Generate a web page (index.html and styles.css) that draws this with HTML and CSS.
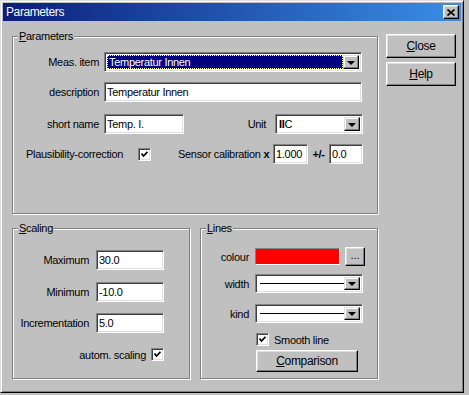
FILE: index.html
```html
<!DOCTYPE html>
<html lang="en">
<head>
  <meta charset="UTF-8" />
  <title>Parameters</title>
  <link rel="stylesheet" href="styles.css">
</head>
<body>
  <div class="window">
    <div class="titlebar">
      <span class="title">Parameters</span>
      <span class="title-btn">
        <svg width="8" height="7" viewBox="0 0 8 7"><path d="M0.5 0.5 L7.5 6.5 M7.5 0.5 L0.5 6.5" stroke="#000" stroke-width="1.6" fill="none"/></svg>
      </span>
    </div>

    <div class="content">
      <div class="main">
        <!-- Parameters group -->
        <fieldset class="group group-params">
          <legend><u>P</u>arameters</legend>

          <div class="row row-meas">
            <span class="lbl">Meas. item</span>
            <div class="combo combo-meas">
              <span class="combo-value selected">Temperatur Innen</span>
              <span class="combo-arrow"><i class="arrow"></i></span>
            </div>
          </div>

          <div class="row row-desc">
            <span class="lbl">description</span>
            <input class="field field-desc" type="text" value="Temperatur Innen" />
          </div>

          <div class="row row-short">
            <span class="lbl">short name</span>
            <input class="field field-short" type="text" value="Temp. I." />
            <span class="unit-lbl">Unit</span>
            <div class="combo combo-unit">
              <span class="combo-value"><b>II</b>C</span>
              <span class="combo-arrow"><i class="arrow"></i></span>
            </div>
          </div>

          <div class="row row-plaus">
            <span class="plaus-lbl">Plausibility-correction</span>
            <span class="check"><svg width="7" height="7" viewBox="0 0 7 7"><path d="M0.5 2.5 L2.5 5 L6.5 0.8" stroke="#000" stroke-width="1.8" fill="none"/></svg></span>
            <span class="calib-lbl">Sensor calibration <b>x</b></span>
            <input class="field field-factor" type="text" value="1.000" />
            <span class="pm-lbl"><b>+/-</b></span>
            <input class="field field-offset" type="text" value="0.0" />
          </div>
        </fieldset>

        <div class="lower">
          <!-- Scaling group -->
          <fieldset class="group group-scaling">
            <legend><u>S</u>caling</legend>
            <div class="srow srow-max">
              <span class="slbl">Maximum</span>
              <input class="field field-scale" type="text" value="30.0" />
            </div>
            <div class="srow srow-min">
              <span class="slbl">Minimum</span>
              <input class="field field-scale" type="text" value="-10.0" />
            </div>
            <div class="srow srow-inc">
              <span class="slbl">Incrementation</span>
              <input class="field field-scale" type="text" value="5.0" />
            </div>
            <div class="srow srow-auto">
              <span class="auto-lbl">autom. scaling</span>
              <span class="check"><svg width="7" height="7" viewBox="0 0 7 7"><path d="M0.5 2.5 L2.5 5 L6.5 0.8" stroke="#000" stroke-width="1.8" fill="none"/></svg></span>
            </div>
          </fieldset>

          <!-- Lines group -->
          <fieldset class="group group-lines">
            <legend><u>L</u>ines</legend>
            <div class="lrow lrow-colour">
              <span class="llbl">colour</span>
              <span class="swatch"></span>
              <button class="btn btn-dots">...</button>
            </div>
            <div class="lrow lrow-width">
              <span class="llbl">width</span>
              <div class="combo combo-line">
                <span class="combo-value"><i class="line-sample"></i></span>
                <span class="combo-arrow"><i class="arrow"></i></span>
              </div>
            </div>
            <div class="lrow lrow-kind">
              <span class="llbl">kind</span>
              <div class="combo combo-line">
                <span class="combo-value"><i class="line-sample"></i></span>
                <span class="combo-arrow"><i class="arrow"></i></span>
              </div>
            </div>
            <div class="lrow lrow-smooth">
              <span class="check"><svg width="7" height="7" viewBox="0 0 7 7"><path d="M0.5 2.5 L2.5 5 L6.5 0.8" stroke="#000" stroke-width="1.8" fill="none"/></svg></span>
              <span class="smooth-lbl">Smooth line</span>
            </div>
            <div class="lrow lrow-comp">
              <button class="btn btn-comp"><u>C</u>omparison</button>
            </div>
          </fieldset>
        </div>
      </div>

      <div class="side">
        <button class="btn btn-side"><u>C</u>lose</button>
        <button class="btn btn-side"><u>H</u>elp</button>
      </div>
    </div>
  </div>
</body>
</html>
```

FILE: styles.css
```css
/* Reset */
* {
  box-sizing: border-box;
}

body {
  margin: 0;
  background: #c0c0c0;
  font-family: 'Liberation Sans', Arial, sans-serif;
  font-size: 11px;
  letter-spacing: -0.3px;
  color: #000;
}

/* Window frame */
.window {
  width: 464px;
  height: 393px;
  padding: 2px;
  background: #c0c0c0;
  border: 1px solid;
  border-color: #dfdfdf #000 #000 #dfdfdf;
  box-shadow: inset 1px 1px #fff, inset -1px -1px #808080;
}

.titlebar {
  height: 18px;
  display: flex;
  align-items: center;
  justify-content: space-between;
  padding: 0 2px 0 2px;
  background: linear-gradient(to right, #0a1e7a, #3a8ee6);
  color: #fff;
  font-size: 12px;
  letter-spacing: -0.4px;
}
.title {
  padding-left: 1px;
}
.title-btn {
  width: 16px;
  height: 14px;
  display: flex;
  align-items: center;
  justify-content: center;
  background: #c0c0c0;
  border: 1px solid;
  border-color: #fff #000 #000 #fff;
  box-shadow: inset -1px -1px #808080, inset 1px 1px #dfdfdf;
}

/* Layout */
.content {
  display: flex;
  gap: 8px;
  padding: 9px 0 0 9px;
}
.main {
  width: 366px;
}
.side {
  display: flex;
  flex-direction: column;
  gap: 4px;
  padding-top: 4px;
}

/* Group boxes */
.group {
  margin: 0;
  padding: 0;
  min-width: 0;
  border: 1px solid #808080;
  box-shadow: inset 1px 1px #fff, 1px 1px #fff;
}
.group legend {
  margin-left: 5px;
  padding: 0 1px;
  line-height: 13px;
  background: #c0c0c0;
}
.group-params {
  height: 184px;
}
.lower {
  display: flex;
  gap: 10px;
  margin-top: 8px;
}
.group-scaling,
.group-lines {
  width: 178px;
  height: 157px;
}

/* Controls */
.field {
  height: 20px;
  margin: 0;
  padding: 0 2px;
  font: inherit;
  letter-spacing: inherit;
  color: #000;
  background: #fff;
  border: 1px solid;
  border-color: #808080 #fff #fff #808080;
  box-shadow: inset 1px 1px #404040, inset -1px -1px #dfdfdf;
  outline: none;
}

.combo {
  height: 20px;
  display: flex;
  padding: 2px;
  background: #fff;
  border: 1px solid;
  border-color: #808080 #fff #fff #808080;
  box-shadow: inset 1px 1px #404040, inset -1px -1px #dfdfdf;
}
.combo-value {
  flex: 1;
  display: flex;
  align-items: center;
  padding-left: 1px;
}
.combo-value.selected {
  background: #000080;
  color: #fff;
  outline: 1px dotted #ffffc0;
  outline-offset: -1px;
  padding-left: 2px;
}
.combo-arrow {
  width: 16px;
  display: flex;
  align-items: center;
  justify-content: center;
  background: #c0c0c0;
  border: 1px solid;
  border-color: #dfdfdf #000 #000 #dfdfdf;
  box-shadow: inset -1px -1px #808080, inset 1px 1px #fff;
}
.arrow {
  width: 0;
  height: 0;
  margin-top: 1px;
  border-left: 4px solid transparent;
  border-right: 4px solid transparent;
  border-top: 4px solid #000;
}
.line-sample {
  width: 84px;
  height: 1px;
  margin-left: 1px;
  background: #000;
}

.check {
  width: 13px;
  height: 13px;
  display: flex;
  align-items: center;
  justify-content: center;
  background: #fff;
  border: 1px solid;
  border-color: #808080 #fff #fff #808080;
  box-shadow: inset 1px 1px #404040, inset -1px -1px #dfdfdf;
}

.btn {
  margin: 0;
  padding: 0;
  font: inherit;
  letter-spacing: inherit;
  color: #000;
  background: #c0c0c0;
  border: 1px solid;
  border-color: #fff #000 #000 #fff;
  box-shadow: inset -1px -1px #808080, inset 1px 1px #dfdfdf;
}
.btn-side {
  width: 70px;
  height: 24px;
  font-size: 12px;
}

/* Parameters rows */
.row {
  width: 350px;
  display: flex;
  align-items: center;
}
.lbl {
  width: 86px;
  text-align: right;
  margin-right: 5px;
}
.row-meas {
  margin-top: 9px;
}
.row-desc {
  margin-top: 10px;
}
.row-short {
  margin-top: 12px;
}
.row-plaus {
  margin-top: 10px;
}
.combo-meas,
.field-desc {
  width: 258px;
}
.field-short {
  width: 80px;
}
.unit-lbl {
  margin-left: auto;
  margin-right: 9px;
}
.combo-unit {
  width: 88px;
}
.plaus-lbl {
  width: 112px;
  padding-left: 13px;
  box-sizing: content-box;
}
.calib-lbl {
  width: 95px;
  margin-left: 27px;
  padding-right: 4px;
  text-align: right;
  white-space: nowrap;
}
.field-factor {
  width: 35px;
}
.pm-lbl {
  width: 21px;
  text-align: center;
}
.field-offset {
  width: 34px;
}

/* Scaling rows */
.srow {
  width: 151px;
  display: flex;
  align-items: center;
}
.slbl {
  width: 76px;
  margin-right: 7px;
  text-align: right;
}
.field-scale {
  width: 68px;
}
.srow-max {
  margin-top: 15px;
}
.srow-min {
  margin-top: 12px;
}
.srow-inc {
  margin-top: 11px;
}
.srow-auto {
  margin-top: 15px;
  justify-content: flex-end;
}
.auto-lbl {
  margin-right: 5px;
}

/* Lines rows */
.lrow {
  display: flex;
  align-items: center;
  padding-left: 54px;
}
.llbl {
  width: 48px;
  margin-left: -54px;
  margin-right: 6px;
  text-align: right;
}
.lrow-colour {
  height: 19px;
  margin-top: 12px;
}
.swatch {
  width: 85px;
  height: 17px;
  background: #ff0000;
  border: 1px solid;
  border-color: #808080 #fff #fff #808080;
}
.btn-dots {
  width: 20px;
  height: 19px;
  margin-left: 5px;
  padding-bottom: 4px;
  letter-spacing: 0;
}
.lrow-width {
  margin-top: 8px;
}
.lrow-kind {
  margin-top: 11px;
}
.combo-line {
  width: 108px;
  height: 19px;
}
.lrow-smooth {
  margin-top: 10px;
  padding-left: 55px;
}
.smooth-lbl {
  margin-left: 5px;
}
.lrow-comp {
  margin-top: 4px;
  padding-left: 55px;
}
.btn-comp {
  width: 102px;
  height: 22px;
  font-size: 12px;
}
```
